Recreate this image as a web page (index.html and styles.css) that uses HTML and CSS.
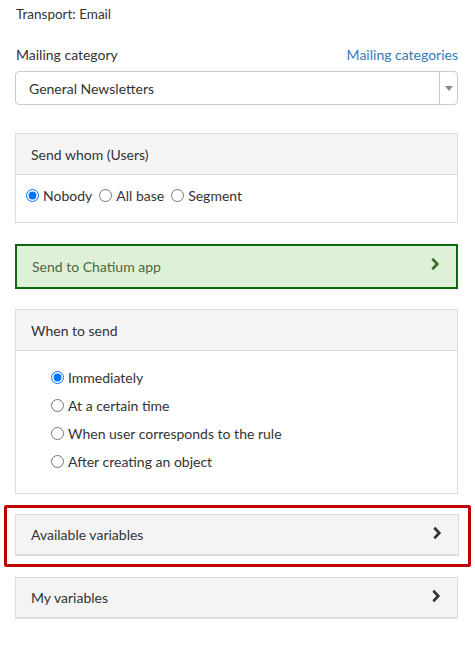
FILE: index.html
```html
<!DOCTYPE html>
<html>
<head>
<meta charset="utf-8">
<link rel="stylesheet" href="styles.css">
</head>
<body>
<div class="page">
  <div class="transport">Transport: Email</div>

  <div class="field">
    <div class="field-head">
      <span class="label">Mailing category</span>
      <a class="link" href="#">Mailing categories</a>
    </div>
    <div class="select">
      <span class="select-value">General Newsletters</span>
      <span class="select-arrow"><svg width="8" height="5" viewBox="0 0 8 5"><path d="M0 0H8L4 5Z" fill="#888"/></svg></span>
    </div>
  </div>

  <div class="panel">
    <div class="panel-head">Send whom (Users)</div>
    <div class="panel-body inline-radios">
      <label class="radio"><input type="radio" name="whom" checked> Nobody</label>
      <label class="radio"><input type="radio" name="whom"> All base</label>
      <label class="radio"><input type="radio" name="whom"> Segment</label>
    </div>
  </div>

  <div class="green-bar">
    <span>Send to Chatium app</span>
    <svg class="chev" width="10" height="14" viewBox="0 0 10 14"><path d="M2.3 1.8L7.3 7L2.3 12.2" fill="none" stroke="#3c6b2a" stroke-width="2.7"/></svg>
  </div>

  <div class="panel panel-when">
    <div class="panel-head">When to send</div>
    <div class="panel-body stack-radios">
      <label class="radio"><input type="radio" name="when" checked> Immediately</label>
      <label class="radio"><input type="radio" name="when"> At a certain time</label>
      <label class="radio"><input type="radio" name="when"> When user corresponds to the rule</label>
      <label class="radio"><input type="radio" name="when"> After creating an object</label>
    </div>
  </div>

  <div class="highlight">
    <div class="collapse">
      <span>Available variables</span>
      <svg class="chev" width="10" height="14" viewBox="0 0 10 14"><path d="M2.3 1.8L7.3 7L2.3 12.2" fill="none" stroke="#333" stroke-width="2.7"/></svg>
    </div>
  </div>

  <div class="collapse">
    <span>My variables</span>
    <svg class="chev" width="10" height="14" viewBox="0 0 10 14"><path d="M2.3 1.8L7.3 7L2.3 12.2" fill="none" stroke="#333" stroke-width="2.7"/></svg>
  </div>
</div>
</body>
</html>
```
FILE: styles.css
```css
html, body {
  margin: 0;
  padding: 0;
  background: #fff;
}
body {
  font-family: Lato, "Open Sans", Arial, sans-serif;
  font-size: 14px;
  color: #333;
}
.page {
  padding: 5px 17px 0 15px;
}
.transport {
  font-size: 13.5px;
  line-height: 18px;
  padding-left: 1px;
}
.field {
  margin-top: 22px;
}
.field-head {
  display: flex;
  justify-content: space-between;
  align-items: baseline;
  line-height: 20px;
  padding-left: 1px;
  margin-bottom: 6px;
}
.label {
  font-size: 14px;
}
.link {
  color: #337ab7;
  text-decoration: none;
  font-size: 14px;
}
.select {
  display: flex;
  height: 32px;
  border: 1px solid #ccc;
  border-radius: 4px;
  align-items: stretch;
}
.select-value {
  flex: 1;
  display: flex;
  align-items: center;
  padding-left: 13px;
}
.select-arrow {
  width: 17px;
  border-left: 1px solid #ccc;
  display: flex;
  align-items: center;
  justify-content: center;
}
.panel {
  border: 1px solid #ddd;
  margin-top: 28px;
}
.panel-when {
  margin-top: 20px;
}
.panel-head {
  background: #f5f5f5;
  border-bottom: 1px solid #ddd;
  height: 40px;
  display: flex;
  align-items: center;
  padding-left: 15px;
}
.panel-body {
  padding: 10px 10px;
}
.inline-radios {
  display: flex;
  height: 28px;
  align-items: center;
  padding-top: 6px;
  padding-bottom: 13px;
  gap: 7px;
}
.radio {
  display: flex;
  align-items: center;
  gap: 4px;
}
.radio input {
  margin: 0;
  width: 13px;
  height: 13px;
}
.stack-radios {
  padding: 16px 10px 22px 35px;
  display: flex;
  flex-direction: column;
  gap: 8px;
}
.stack-radios .radio {
  height: 20px;
}
.green-bar {
  margin-top: 21px;
  height: 41px;
  border: 2px solid #0a6a0a;
  background: #dff0d8;
  color: #4a6a3c;
  display: flex;
  align-items: center;
  justify-content: space-between;
  padding: 0 16px 0 15px;
}
.green-bar .chev {
  margin-top: -5px;
}
.highlight {
  margin: 11px -13px 0 -11px;
  border: 3px solid #c00000;
  border-radius: 2px;
  padding: 6px 9px 8px 8px;
}
.collapse {
  height: 39px;
  border: 1px solid #ddd;
  border-bottom-width: 2px;
  background: #f4f4f4;
  display: flex;
  align-items: center;
  justify-content: space-between;
  padding: 0 16px 0 15px;
}
.collapse .chev {
  margin-top: -4px;
}
.highlight + .collapse {
  margin-top: 10px;
}
```
